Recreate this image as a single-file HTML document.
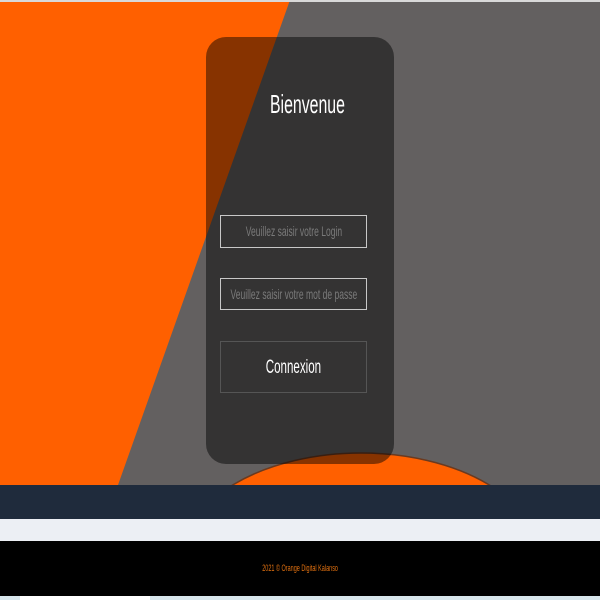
<!DOCTYPE html>
<html style="overflow:hidden"><head><style>
*{margin:0;padding:0;box-sizing:border-box}
html,body{width:600px;height:600px;overflow:hidden}
body{background:#636060;position:relative;font-family:"Liberation Sans",sans-serif}
.abs{position:absolute}
.t{position:absolute;left:0;width:100%;display:flex;justify-content:center;white-space:nowrap;line-height:1.15}
.t span{display:inline-block;flex-shrink:0;transform:scaleX(0.61)}
</style></head><body>
<svg class="abs" style="left:0;top:0" width="600" height="485">
<polygon points="0,0 290,0 118,485 0,485" fill="#ff6000"/>
<ellipse cx="361" cy="560" rx="180" ry="107" fill="#ff6000" stroke="#6a3a20" stroke-width="1.5"/>
<rect x="0" y="0" width="600" height="2" fill="#d9d9d9"/>
</svg>
<div class="abs" style="left:206px;top:37px;width:188px;height:427px;border-radius:20px;background:rgba(0,0,0,0.47)"></div>
<div class="t" style="top:90px;font-size:26px;color:#fff;left:206px;width:203px"><span>Bienvenue</span></div>
<div class="abs" style="left:220px;top:215px;width:147px;height:33px;border:1.5px solid #c8c8c8"></div>
<div class="t" style="top:223px;left:220px;width:147px;font-size:14px;color:#7a7a7a"><span>Veuillez saisir votre Login</span></div>
<div class="abs" style="left:220px;top:278px;width:147px;height:32px;border:1.5px solid #c8c8c8"></div>
<div class="t" style="top:286px;left:220px;width:147px;font-size:14px;color:#7a7a7a"><span>Veuillez saisir votre mot de passe</span></div>
<div class="abs" style="left:220px;top:341px;width:147px;height:52px;border:1px solid #555"></div>
<div class="t" style="top:357px;left:220px;width:147px;font-size:19px;color:#fff"><span>Connexion</span></div>
<div class="abs" style="left:0;top:485px;width:600px;height:34px;background:#1f2b3c"></div>
<div class="abs" style="left:0;top:519px;width:600px;height:22px;background:#eceff4"></div>
<div class="abs" style="left:0;top:541px;width:600px;height:55px;background:#000"></div>
<div class="t" style="top:563px;font-size:9px;color:#e07010"><span>2021 © Orange Digital Kalanso</span></div>
<div class="abs" style="left:0;top:596px;width:600px;height:4px;background:#d8e6ec"></div>
<div class="abs" style="left:20px;top:596px;width:130px;height:4px;background:#fff"></div>
</body></html>
